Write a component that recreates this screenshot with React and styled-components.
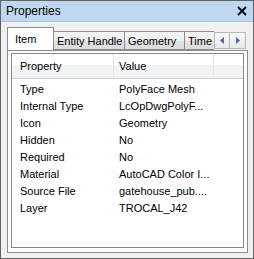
import styled, { createGlobalStyle } from "styled-components";

const GlobalStyle = createGlobalStyle`
  html, body {
    margin: 0;
    padding: 0;
    background: #f0f0f0;
  }
  * {
    box-sizing: border-box;
  }
`;

const rows = [
  ["Type", "PolyFace Mesh"],
  ["Internal Type", "LcOpDwgPolyF..."],
  ["Icon", "Geometry"],
  ["Hidden", "No"],
  ["Required", "No"],
  ["Material", "AutoCAD Color I..."],
  ["Source File", "gatehouse_pub...."],
  ["Layer", "TROCAL_J42"],
];

const tabs = [
  { label: "Item", width: 47 },
  { label: "Entity Handle", width: 72 },
  { label: "Geometry", width: 61 },
  { label: "Time", width: 60 },
];

function App() {
  return (
    <>
      <GlobalStyle />
      <Window>
        <TitleBar>
          <Title>Properties</Title>
          <Close viewBox="0 0 10 10" aria-label="close">
            <path d="M1 1 L9 9 M9 1 L1 9" stroke="#000" strokeWidth="1.8" />
          </Close>
        </TitleBar>
        <Body>
          <TabRow>
            <TabList>
              {tabs.map((t, i) => (
                <Tab key={t.label} $active={i === 0} $width={t.width}>
                  {t.label}
                </Tab>
              ))}
            </TabList>
            <Scroller>
              <ScrollButton>
                <svg width="5" height="7" viewBox="0 0 5 7">
                  <path d="M4 0 L4 7 L0 3.5 Z" fill="#4e6a9a" />
                </svg>
              </ScrollButton>
              <ScrollButton>
                <svg width="5" height="7" viewBox="0 0 5 7">
                  <path d="M1 0 L1 7 L5 3.5 Z" fill="#4e6a9a" />
                </svg>
              </ScrollButton>
            </Scroller>
          </TabRow>
          <Panel>
            <ListView>
              <Header>
                <HeadCell $first>Property</HeadCell>
                <HeadCell>Value</HeadCell>
                <HeadCell $last />
              </Header>
              <Rows>
                {rows.map(([k, v]) => (
                  <Row key={k}>
                    <Cell $first>{k}</Cell>
                    <Cell>{v}</Cell>
                  </Row>
                ))}
              </Rows>
            </ListView>
          </Panel>
        </Body>
      </Window>
    </>
  );
}

export default App;

const Window = styled.div`
  width: 254px;
  height: 259px;
  border: 1px solid #646464;
  background: #f0f0f0;
  display: flex;
  flex-direction: column;
  font-family: "Liberation Sans", Arial, sans-serif;
  font-size: 11px;
  color: #000;
`;

const TitleBar = styled.div`
  height: 21px;
  flex: none;
  display: flex;
  align-items: center;
  justify-content: space-between;
  padding: 0 6px 1px 5px;
  background: #bfd8f0;
  border-bottom: 1px solid #aac3dc;
`;

const Title = styled.span`
  font-size: 12px;
`;

const Close = styled.svg`
  width: 10px;
  height: 10px;
`;

const Body = styled.div`
  flex: 1;
  display: flex;
  flex-direction: column;
  padding: 5px 5px 5px 6px;
`;

const TabRow = styled.div`
  height: 23px;
  flex: none;
  display: flex;
  align-items: flex-end;
`;

const TabList = styled.div`
  flex: 1;
  min-width: 0;
  height: 100%;
  display: flex;
  align-items: flex-end;
  overflow: hidden;
`;

const Tab = styled.div`
  position: relative;
  z-index: ${(p) => (p.$active ? 2 : 1)};
  flex: none;
  width: ${(p) => p.$width}px;
  height: ${(p) => (p.$active ? 24 : 19)}px;
  margin-bottom: ${(p) => (p.$active ? -1 : 0)}px;
  margin-left: ${(p) => (p.$active ? 0 : -1)}px;
  padding: ${(p) => (p.$active ? "5px 0 0 7px" : "3px 0 0 3px")};
  border: 1px solid #898c95;
  border-bottom: ${(p) => (p.$active ? "none" : "1px solid #898c95")};
  background: ${(p) =>
    p.$active
      ? "#ffffff"
      : "linear-gradient(#f4f4f4 0%, #eeeeee 50%, #e3e3e3 51%, #dbdbdb 100%)"};
  white-space: nowrap;
  font-size: 11px;
  &:first-child {
    margin-left: 0;
  }
`;

const Scroller = styled.div`
  flex: none;
  display: flex;
  align-self: flex-start;
  margin: 5px 2px 0 0;
`;

const ScrollButton = styled.div`
  width: 16px;
  height: 17px;
  display: flex;
  align-items: center;
  justify-content: center;
  border: 1px solid #b6b8bd;
  background: linear-gradient(#f7f7f7, #e8e8e8);
  & + & {
    border-left: none;
  }
`;

const Panel = styled.div`
  flex: 1;
  display: flex;
  padding: 2px 3px 4px 3px;
  border: 1px solid #898c95;
  background: #fcfcfc;
`;

const ListView = styled.div`
  flex: 1;
  display: flex;
  flex-direction: column;
  border: 1px solid #828790;
  background: #ffffff;
`;

const Header = styled.div`
  height: 25px;
  flex: none;
  display: grid;
  grid-template-columns: 102px 100px 1fr;
  border-bottom: 1px solid #d5d5d5;
  background: linear-gradient(#ffffff 0%, #ffffff 45%, #f3f4f6 46%, #f1f2f4 100%);
`;

const HeadCell = styled.div`
  display: flex;
  align-items: center;
  padding-left: ${(p) => (p.$first ? 8 : 5)}px;
  border-right: ${(p) => (p.$last ? "none" : "1px solid #e3e5e8")};
`;

const Rows = styled.div`
  padding-top: 1px;
`;

const Row = styled.div`
  height: 17px;
  display: grid;
  grid-template-columns: 102px 100px 1fr;
  align-items: center;
`;

const Cell = styled.div`
  padding-left: ${(p) => (p.$first ? 8 : 5)}px;
  white-space: nowrap;
`;
